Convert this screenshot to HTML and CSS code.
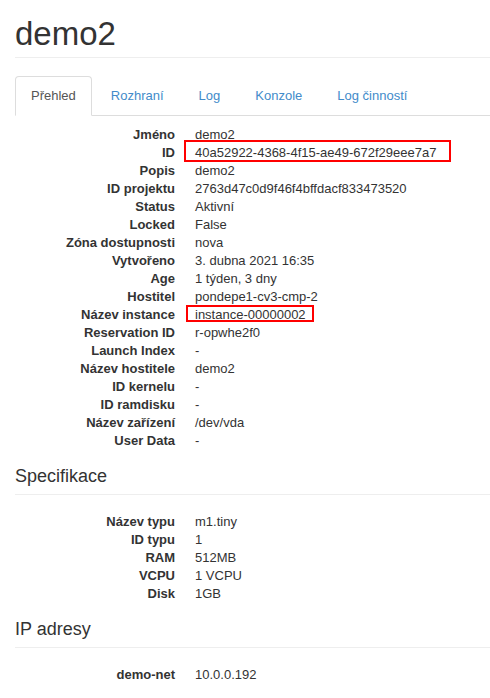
FILE: index.html
```html
<!DOCTYPE html>
<html lang="cs">
<head>
<meta charset="utf-8">
<title>demo2</title>
<link rel="stylesheet" href="styles.css">
</head>
<body>
<div class="page">
  <div class="page-header"><h1>demo2</h1></div>
  <ul class="tabs">
    <li class="tab active"><a>Přehled</a></li>
    <li class="tab"><a>Rozhraní</a></li>
    <li class="tab"><a>Log</a></li>
    <li class="tab"><a>Konzole</a></li>
    <li class="tab"><a>Log činností</a></li>
  </ul>
  <dl class="info first">
    <dt>Jméno</dt><dd>demo2</dd>
    <dt>ID</dt><dd><span class="hl hl-id">40a52922-4368-4f15-ae49-672f29eee7a7</span></dd>
    <dt>Popis</dt><dd>demo2</dd>
    <dt>ID projektu</dt><dd>2763d47c0d9f46f4bffdacf833473520</dd>
    <dt>Status</dt><dd>Aktivní</dd>
    <dt>Locked</dt><dd>False</dd>
    <dt>Zóna dostupnosti</dt><dd>nova</dd>
    <dt>Vytvořeno</dt><dd>3. dubna 2021 16:35</dd>
    <dt>Age</dt><dd>1 týden, 3 dny</dd>
    <dt>Hostitel</dt><dd>pondepe1-cv3-cmp-2</dd>
    <dt>Název instance</dt><dd><span class="hl hl-inst">instance-00000002</span></dd>
    <dt>Reservation ID</dt><dd>r-opwhe2f0</dd>
    <dt>Launch Index</dt><dd>-</dd>
    <dt>Název hostitele</dt><dd>demo2</dd>
    <dt>ID kernelu</dt><dd>-</dd>
    <dt>ID ramdisku</dt><dd>-</dd>
    <dt>Název zařízení</dt><dd>/dev/vda</dd>
    <dt>User Data</dt><dd>-</dd>
  </dl>
  <h4 class="section">Specifikace</h4>
  <dl class="info">
    <dt>Název typu</dt><dd>m1.tiny</dd>
    <dt>ID typu</dt><dd>1</dd>
    <dt>RAM</dt><dd>512MB</dd>
    <dt>VCPU</dt><dd>1 VCPU</dd>
    <dt>Disk</dt><dd>1GB</dd>
  </dl>
  <h4 class="section">IP adresy</h4>
  <dl class="info">
    <dt>demo-net</dt><dd>10.0.0.192</dd>
  </dl>
</div>
</body>
</html>
```

FILE: styles.css
```css
html, body {
  margin: 0;
  padding: 0;
  background: #fff;
}
body {
  font-family: "Liberation Sans", Arial, sans-serif;
  font-size: 13px;
  line-height: 18px;
  color: #333;
  overflow: hidden;
}
.page {
  padding: 0 0 0 15px;
}
.page-header {
  margin: 0 0 18px 0;
  padding: 14px 0 4px 0;
  border-bottom: 1px solid #eee;
}
.page-header h1 {
  margin: 0;
  font-size: 33px;
  line-height: 39px;
  font-weight: 500;
  color: #333;
}
.tabs {
  list-style: none;
  margin: 0;
  padding: 0;
  display: flex;
  border-bottom: 1px solid #ddd;
}
.tab {
  margin-right: 3px;
  margin-bottom: -1px;
}
.tab a {
  display: block;
  padding: 9px 15px 9px;
  line-height: 20px;
  border: 1px solid transparent;
  border-radius: 4px 4px 0 0;
  color: #428bca;
}
.tab.active a {
  color: #555;
  background: #fff;
  border-color: #ddd #ddd transparent;
}
.info {
  display: grid;
  grid-template-columns: 160px 1fr;
  column-gap: 20px;
  margin: 18px 0 0 0;
}
.info.first {
  margin-top: 10px;
}
.info dt {
  text-align: right;
  font-weight: bold;
  white-space: nowrap;
}
.info dd {
  margin: 0;
  white-space: nowrap;
}
.section {
  margin: 16px 0 0 0;
  padding-bottom: 8px;
  border-bottom: 1px solid #eee;
  font-size: 18px;
  line-height: 20px;
  font-weight: 500;
  color: #333;
}
.hl {
  position: relative;
}
.hl::after {
  content: "";
  position: absolute;
  border: 2px solid #f00;
}
.hl-id::after {
  left: -11px;
  right: -15px;
  top: -5px;
  bottom: -2px;
}
.hl-inst::after {
  left: -9px;
  right: -8px;
  top: -2px;
  bottom: 0;
}
```
